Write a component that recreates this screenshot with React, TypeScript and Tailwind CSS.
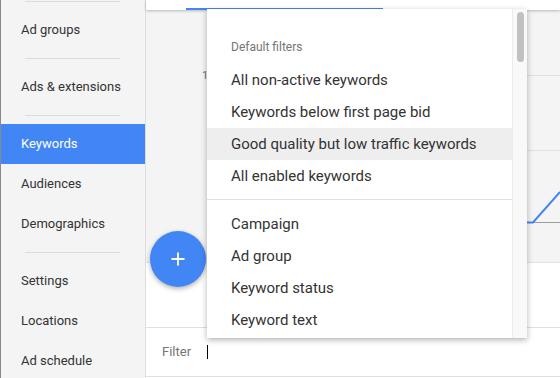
import { Plus } from "lucide-react";

const font = { fontFamily: "Roboto, 'Liberation Sans', sans-serif" };

function Divider() {
  return (
    <div className="h-[17px] flex items-center">
      <div className="ml-[24px] w-[95px] h-px bg-[#dcdcdc]" />
    </div>
  );
}

function NavItem({ label, active }: { label: string; active?: boolean }) {
  return (
    <div
      className={
        "h-10 flex items-center pl-[20px] text-[13px] " +
        (active ? "bg-[#4285f4] text-white" : "text-[#333]")
      }
    >
      {label}
    </div>
  );
}

const defaultFilters = [
  "All non-active keywords",
  "Keywords below first page bid",
  "Good quality but low traffic keywords",
  "All enabled keywords",
];
const fields = ["Campaign", "Ad group", "Keyword status", "Keyword text"];

function MenuItem({ label, hover }: { label: string; hover?: boolean }) {
  return (
    <div
      className={
        "h-8 flex items-center pl-6 text-[15px] text-[#333] " +
        (hover ? "bg-[#eeeeee]" : "")
      }
    >
      {label}
    </div>
  );
}

export default function App() {
  return (
    <div
      className="w-[560px] h-[378px] flex overflow-hidden bg-white"
      style={font}
    >
      {/* sidebar */}
      <div className="w-[146px] shrink-0 bg-[#f4f4f4] border-l border-l-[#8a8a8a] border-r border-r-[#dedede] overflow-hidden">
        <div className="-mt-[7px]">
          <Divider />
          <NavItem label="Ad groups" />
          <Divider />
          <NavItem label="Ads & extensions" />
          <Divider />
          <NavItem label="Keywords" active />
          <NavItem label="Audiences" />
          <NavItem label="Demographics" />
          <Divider />
          <NavItem label="Settings" />
          <NavItem label="Locations" />
          <NavItem label="Ad schedule" />
        </div>
      </div>

      {/* main */}
      <div className="relative flex-1 flex flex-col">
        <div className="h-[10px] bg-white flex flex-col justify-end shadow-[0_1px_3px_rgba(0,0,0,0.25)] z-10">
          <div className="ml-[40px] w-[197px] h-[2px] bg-[#4285f4]" />
        </div>
        <div className="h-[253px] bg-[#f4f4f4] border-b border-[#e2e2e2]">
          <svg width="414" height="252" viewBox="0 0 414 252">
            <text
              x="56"
              y="69"
              fontSize="11"
              fill="#757575"
              fontFamily="Roboto, 'Liberation Sans', sans-serif"
            >
              1
            </text>
            <line x1="62" y1="65.5" x2="414" y2="65.5" stroke="#e0e0e0" />
            <line x1="62" y1="140.5" x2="414" y2="140.5" stroke="#e0e0e0" />
            <line x1="62" y1="212.5" x2="414" y2="212.5" stroke="#9e9e9e" />
            <polyline
              points="62,212.5 387,212.5 414,182"
              fill="none"
              stroke="#4285f4"
              strokeWidth="2"
            />
          </svg>
        </div>
        <div className="h-[65px] bg-white border-b border-[#e0e0e0]" />
        <div className="h-[49px] bg-white border-b border-[#e0e0e0] flex items-center pl-4">
          <span className="text-[13px] text-[#757575]">Filter</span>
          <span className="ml-[16px] w-px h-[14px] bg-black" />
        </div>

        {/* floating action button */}
        <div className="absolute left-[4px] top-[231px] w-14 h-14 rounded-full bg-[#4285f4] flex items-center justify-center shadow-[0_2px_5px_rgba(0,0,0,0.3)]">
          <Plus size={20} color="white" strokeWidth={2.2} />
        </div>

        {/* dropdown */}
        <div className="absolute left-[61px] top-[9px] w-[320px] h-[329px] bg-white flex shadow-[0_2px_6px_rgba(0,0,0,0.3)] z-20">
          <div className="flex-1">
            <div className="pt-[31px] pb-[10px] pl-6 text-[12px] leading-[14px] text-[#757575]">
              Default filters
            </div>
            {defaultFilters.map((f, i) => (
              <MenuItem key={f} label={f} hover={i === 2} />
            ))}
            <div className="mt-[7px] mb-[8px] h-px bg-[#e0e0e0]" />
            {fields.map((f) => (
              <MenuItem key={f} label={f} />
            ))}
          </div>
          <div className="w-[15px] bg-[#f9f9f9] border-l border-[#ececec] pt-[3px] flex justify-center">
            <div className="w-[7px] h-[50px] rounded-full bg-[#c1c1c1]" />
          </div>
        </div>
      </div>
    </div>
  );
}
